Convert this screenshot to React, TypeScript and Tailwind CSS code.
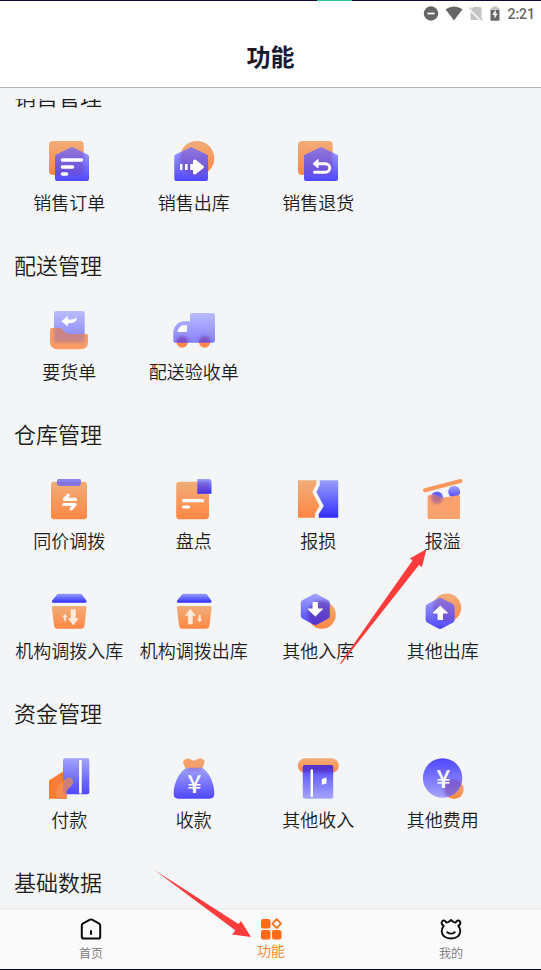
import { useId, type ReactNode } from "react";

type PaintProps = { children: (paint: { orange: string; blue: string; deep: string; reverse: string; pale: string; id: string }) => ReactNode };

/** 42×42 canvas with the shared orange and blue gradients. */
function Glyph({ children }: PaintProps) {
  const id = useId().replace(/[^a-zA-Z0-9]/g, "");
  const ramp = (name: string, from: string, to: string) => (
    <linearGradient id={id + name} x1="0" y1="0" x2="0" y2="1">
      <stop offset="0" stopColor={from} />
      <stop offset="1" stopColor={to} />
    </linearGradient>
  );
  const url = (name: string) => `url(#${id}${name})`;
  return (
    <svg viewBox="0 0 42 42" className="size-[42px] overflow-visible" aria-hidden="true">
      <defs>
        {ramp("o", "#f0ad7a", "#ff8743")}
        {ramp("b", "#a3a3fb", "#4f47ff")}
        {ramp("d", "#9aa0f8", "#322cff")}
        {ramp("r", "#4f47ff", "#a5a5fb")}
        {ramp("p", "#babcfd", "#8681fc")}
        <filter id={id + "f"} x="-20%" y="-20%" width="140%" height="140%">
          <feGaussianBlur stdDeviation="1.5" />
        </filter>
      </defs>
      {children({ orange: url("o"), blue: url("b"), deep: url("d"), reverse: url("r"), pale: url("p"), id })}
    </svg>
  );
}

/** A shape of frosted glass through which the shape behind shows softly. */
function Glass({ id, shape, behind, fill, tint = "#7439a8", strength = 0.5 }: { id: string; shape: string; behind: ReactNode; fill: string; tint?: string; strength?: number }) {
  return (
    <>
      <path d={shape} fill={fill} />
      <clipPath id={id + "c"}>
        <path d={shape} />
      </clipPath>
      <g clipPath={`url(#${id}c)`}>
        <g filter={`url(#${id}f)`} fill={tint} stroke="none" opacity={strength}>
          {behind}
        </g>
      </g>
    </>
  );
}

const HOUSE_RIGHT = "M7 16.500Q7 15 8.400 14.400L23 7.500Q24 7 25 7.500L39.600 14.400Q41 15 41 16.500V39Q41 41 39 41H9Q7 41 7 39Z";
const HOUSE_LEFT = "M1.300 16.500Q1.300 15 2.700 14.400L17.200 7.500Q18.200 7 19.200 7.500L33.700 14.400Q35 15 35 16.500V39Q35 41 33 41H3.300Q1.300 41 1.300 39Z";

const SalesOrder = () => (
  <Glyph>
    {(p) => (
      <>
        <rect x="1" y="1" width="34.700" height="34" rx="4" fill={p.orange} />
        <Glass id={p.id} shape={HOUSE_RIGHT} fill={p.blue} strength={0.4} behind={<rect x="1" y="1" width="34.700" height="34" rx="4" />} />
        <path d="M14.500 20H33.500M14.500 27H24.500M14.500 34H18.500" stroke="#fff" strokeWidth="3.600" strokeLinecap="round" />
      </>
    )}
  </Glyph>
);

const SalesOut = () => (
  <Glyph>
    {(p) => (
      <>
        <circle cx="24" cy="18.300" r="17.300" fill={p.orange} />
        <Glass id={p.id} shape={HOUSE_LEFT} fill={p.blue} strength={0.4} behind={<circle cx="24" cy="18.300" r="17.300" />} />
        <path d="M7 24H9.400V30H7ZM12 24H14.600V30H12ZM17.300 24H20V21Q20.500 18.500 23 20L30.500 26Q31.500 27 30.500 28L23 34Q20.500 35.500 20 33V30H17.300Z" fill="#fff" />
      </>
    )}
  </Glyph>
);

const SalesReturn = () => (
  <Glyph>
    {(p) => (
      <>
        <rect x="1" y="1" width="34.700" height="34" rx="4" fill={p.orange} />
        <Glass id={p.id} shape={HOUSE_RIGHT} fill={p.blue} strength={0.4} behind={<rect x="1" y="1" width="34.700" height="34" rx="4" />} />
        <path d="M19 23.700H28.500A4.200 4.200 0 0 1 28.500 32.200H17.500" fill="none" stroke="#fff" strokeWidth="3" strokeLinecap="round" />
        <path d="M16 23.700L21 19.500V28Z" fill="#fff" stroke="#fff" strokeLinejoin="round" />
      </>
    )}
  </Glyph>
);

const GoodsRequest = () => (
  <Glyph>
    {(p) => (
      <>
        <rect x="6" y="2" width="30.700" height="31.500" rx="2" fill={p.pale} />
        <Glass
          id={p.id}
          shape="M2 20.500Q2 19 3.500 19H12Q14 19 15.500 21.500Q17.500 25 20.500 25H38.500Q40 25 40 26.500V33Q40 40.300 32.500 40.300H9.500Q2 40.300 2 33Z"
          fill="#ff9c66"
          tint="#ad7894"
          strength={0.65}
          behind={<rect x="6" y="10" width="30.700" height="23.500" />}
        />
        <path d="M13.500 12.300L19.800 6.800V10.200Q26 11 28.500 8.500V10.500Q27.500 14.500 19.800 14.300V17.500Z" fill="#fff" />
      </>
    )}
  </Glyph>
);

const Truck = () => (
  <Glyph>
    {(p) => (
      <>
        <circle cx="9.200" cy="33" r="5.700" fill="#ff8748" />
        <circle cx="31.600" cy="33" r="5.700" fill="#ff8748" />
        <Glass
          id={p.id}
          shape="M17 6Q17 4 19 4H40Q42 4 42 6V31.700Q42 33.700 40 33.700H2.300Q.3 33.700 .3 31.700V22Q3 12.300 11 12.300H17Z"
          fill={p.pale}
          strength={0.65}
          behind={<><circle cx="9.200" cy="33" r="6" /><circle cx="31.600" cy="33" r="6" /></>}
        />
        <path d="M14 16.200V21.800Q14 23 12.800 23H5.200Q4.200 23 4.700 21.500Q7 16.200 11 16.200Z" fill="#fff" />
      </>
    )}
  </Glyph>
);

const EqualTransfer = () => (
  <Glyph>
    {(p) => (
      <>
        <rect x="3" y="3.700" width="36" height="37.600" rx="3" fill={p.orange} />
        <rect x="9" y="1" width="24" height="7" rx="3.200" fill="#8374dc" />
        <rect x="9" y="1" width="24" height="3" rx="1.500" fill="#8c84f0" />
        <path d="M27.500 21.300H16.300L20.200 17.300M15.800 26.500H27L23.200 31" fill="none" stroke="#fff" strokeWidth="3.200" strokeLinecap="round" strokeLinejoin="round" />
      </>
    )}
  </Glyph>
);

const StockCount = () => (
  <Glyph>
    {(p) => (
      <>
        <rect x="3.200" y="3.700" width="32.800" height="37.600" rx="3.500" fill={p.orange} />
        <Glass
          id={p.id}
          shape="M24.300 1H35.500Q38.500 1 38.500 4V15.800H24.300Z"
          fill={p.deep}
          strength={0.4}
          behind={<rect x="24" y="4" width="12" height="12" />}
        />
        <path d="M10.600 22.700H29.500M10.600 29H15.600" stroke="#fff" strokeWidth="3.200" strokeLinecap="round" />
      </>
    )}
  </Glyph>
);

const Damage = () => (
  <Glyph>
    {(p) => (
      <>
        <path d="M1 2.300H19.400V6L15.400 14L22.600 28L18 35.500V39.700H1Z" fill={p.orange} />
        <path d="M22.800 2.300H41.200V39.700H21.800V36L26.800 28L19.400 14L22.800 7Z" fill={p.deep} />
      </>
    )}
  </Glyph>
);

const Overflow = () => (
  <Glyph>
    {(p) => (
      <>
        <path d="M3 12.300L38.500 3" stroke="#f8985f" strokeWidth="4" strokeLinecap="round" />
        <circle cx="15" cy="19.400" r="6" fill="#6862fc" />
        <circle cx="32.200" cy="13.700" r="6" fill={p.blue} />
        <Glass
          id={p.id}
          shape="M5.600 19Q5.600 17.500 7 17.300L11 16.500Q15 17.500 17.500 19Q19.500 20 22 19.400L36.500 17.200Q38 17 38 18.500V39.500Q38 41 36.500 41H7Q5.600 41 5.600 39.500Z"
          fill="#fba16d"
          tint="#aa6494"
          strength={0.8}
          behind={<circle cx="15" cy="19.700" r="6" />}
        />
      </>
    )}
  </Glyph>
);

const Basket = ({ incoming = false }: { incoming?: boolean }) => (
  <Glyph>
    {(p) => (
      <>
        <path d="M11 5.700H32Q33.200 5.700 34 6.500L38.300 12.500Q39.300 14.700 37 14.700H5.500Q3.200 14.700 4.200 12.500L9 6.500Q9.800 5.700 11 5.700Z" fill={p.deep} />
        <path d="M5.500 18H37Q38.700 18 38.600 19.500L36.400 38Q36 40.700 33.500 40.700H9Q6.500 40.700 6.100 38L3.900 19.500Q3.800 18 5.500 18Z" fill={p.orange} />
        {incoming ? (
          <path d="M17 26L19.300 29H17.700V33H16.300V29H14.700ZM23 22Q23 21.500 23.500 21.500H27Q27.500 21.500 27.500 22V30.500H30.300L25.300 37L20.300 30.500H23Z" fill="#ffeadc" stroke="#ffeadc" strokeWidth=".5" strokeLinejoin="round" />
        ) : (
          <path d="M17.300 21L22.300 27.500H19.500V35.500Q19.500 36 19 36H15.700Q15.200 36 15.200 35.500V27.500H12.300ZM26 27H27.400V31H29L26.700 34L24.400 31H26Z" fill="#ffeadc" stroke="#ffeadc" strokeWidth=".5" strokeLinejoin="round" />
        )}
      </>
    )}
  </Glyph>
);

const OtherIn = () => (
  <Glyph>
    {(p) => (
      <>
        <circle cx="24.800" cy="26.800" r="14" fill={p.orange} />
        <Glass
          id={p.id}
          shape="M16 6.500Q18.300 5 20.500 6.500L31.300 12.300Q32.800 13.300 32.800 15V27.800Q32.800 29.500 31.300 30.500L20.500 36.300Q18.300 37.800 16 36.300L5.300 30.500Q3.800 29.500 3.800 27.800V15Q3.800 13.300 5.300 12.300Z"
          fill={p.blue}
          tint="#571b9b"
          behind={<circle cx="24.800" cy="26.800" r="14" />}
        />
        <path d="M16 14.500H20.500V21H25.500L18.300 28L11 21H16Z" fill="#fff" stroke="#fff" strokeWidth="1" strokeLinejoin="round" />
      </>
    )}
  </Glyph>
);

const OtherOut = () => (
  <Glyph>
    {(p) => (
      <>
        <circle cx="25" cy="19.700" r="14.200" fill={p.orange} />
        <Glass
          id={p.id}
          shape="M15.800 10.500Q18.100 9 20.300 10.500L31.100 16.300Q32.600 17.300 32.600 19V31.800Q32.600 33.500 31.100 34.500L20.300 40.300Q18.100 41.800 15.800 40.300L5.100 34.500Q3.600 33.500 3.600 31.800V19Q3.600 17.300 5.100 16.300Z"
          fill={p.blue}
          strength={0.4}
          behind={<circle cx="25" cy="19.700" r="14.200" />}
        />
        <path d="M18.200 18L25.500 25H20.500V31.500H16V25H11Z" fill="#fff" stroke="#fff" strokeWidth="1" strokeLinejoin="round" />
      </>
    )}
  </Glyph>
);

const Pay = () => (
  <Glyph>
    {(p) => (
      <>
        <path d="M1 23.500L18.700 12V41.700H1Z" fill="#ff7d31" />
        <rect x="15" y="1.300" width="26.300" height="36" rx="2" fill={p.blue} />
        <path d="M32.400 4V35.500" stroke="#fff" strokeWidth="2.600" strokeLinecap="round" />
        <path d="M8.500 41.700V34Q8.500 30.500 11 28L18 21.500Q22 19 24.500 22.500Q26 25.500 23.500 28.500L18.700 33.500V41.700Z" fill="#cd8079" />
        <path d="M8.500 41.700V34Q8.500 30.500 11 28L15 24.500V37.500H18.700V41.700Z" fill="#ff8c4d" />
      </>
    )}
  </Glyph>
);

function Yen({ y }: { y: number }) {
  return (
    <text x="21.300" y={y} textAnchor="middle" fill="#fff" className="font-['Noto_Sans_CJK_SC',sans-serif] text-[25px] leading-6 font-medium">
      ¥
    </text>
  );
}

const Collect = () => (
  <Glyph>
    {(p) => (
      <>
        <path d="M14 1.500Q17 1.300 19 3Q21 4 23 3Q25 1.300 28 1.500Q33 3 31 7L28.500 14H14L10.500 7Q9 3 14 1.500Z" fill="#f4a06b" />
        <Glass
          id={p.id}
          shape="M14 10.700H28.500C35 13 41.300 25 41.300 36.500Q41.300 41.700 36.500 41.700H5.500Q.6 41.700 .6 36.500C.6 25 7.500 13 14 10.700Z"
          fill={p.blue}
          strength={0.3}
          behind={<rect x="14" y="8" width="14" height="6" />}
        />
        <Yen y={36} />
      </>
    )}
  </Glyph>
);

const OtherIncome = () => (
  <Glyph>
    {(p) => (
      <>
        <rect x=".8" y="1.300" width="41" height="14.700" rx="7.300" fill={p.orange} />
        <Glass
          id={p.id}
          shape="M8 8H34Q36.200 8 36.200 10V39.500Q36.200 41.700 34 41.700H8Q5.800 41.700 5.800 39.500V10Q5.800 8 8 8Z"
          fill={p.reverse}
          tint="#561a98"
          behind={<rect x="2" y="1" width="38" height="14.500" />}
        />
        <path d="M14.800 13.500V39" stroke="#fff" strokeWidth="2.400" strokeLinecap="round" />
        <path d="M24.800 22L29.500 20.500V26.500L24.800 27.800Z" fill="#fff" />
      </>
    )}
  </Glyph>
);

const OtherCost = () => (
  <Glyph>
    {(p) => (
      <>
        <circle cx="32" cy="32.300" r="9.700" fill={p.orange} />
        <Glass id={p.id} shape="M20.600 1.300A19.700 19.700 0 1 1 20.600 40.700A19.700 19.700 0 1 1 20.600 1.300Z" fill={p.reverse} behind={<circle cx="32" cy="32.300" r="10" />} />
        <Yen y={31} />
      </>
    )}
  </Glyph>
);

type Item = { label: string; icon: ReactNode };

const sections: { title: string; items: Item[] }[] = [
  {
    title: "销售管理",
    items: [
      { label: "销售订单", icon: <SalesOrder /> },
      { label: "销售出库", icon: <SalesOut /> },
      { label: "销售退货", icon: <SalesReturn /> },
    ],
  },
  {
    title: "配送管理",
    items: [
      { label: "要货单", icon: <GoodsRequest /> },
      { label: "配送验收单", icon: <Truck /> },
    ],
  },
  {
    title: "仓库管理",
    items: [
      { label: "同价调拨", icon: <EqualTransfer /> },
      { label: "盘点", icon: <StockCount /> },
      { label: "报损", icon: <Damage /> },
      { label: "报溢", icon: <Overflow /> },
      { label: "机构调拨入库", icon: <Basket incoming /> },
      { label: "机构调拨出库", icon: <Basket /> },
      { label: "其他入库", icon: <OtherIn /> },
      { label: "其他出库", icon: <OtherOut /> },
    ],
  },
  {
    title: "资金管理",
    items: [
      { label: "付款", icon: <Pay /> },
      { label: "收款", icon: <Collect /> },
      { label: "其他收入", icon: <OtherIncome /> },
      { label: "其他费用", icon: <OtherCost /> },
    ],
  },
  { title: "基础数据", items: [] },
];

function StatusBar() {
  return (
    <div className="flex h-[26px] items-center justify-end gap-[6px] pr-[6px] text-[#666]">
      <svg viewBox="0 0 16 16" className="size-4" aria-hidden="true">
        <circle cx="8" cy="7.500" r="7.200" fill="currentColor" />
        <path d="M4.500 7.500H11.500" stroke="#fff" strokeWidth="1.800" />
      </svg>
      <svg viewBox="0 0 18 16" className="h-4 w-[18px]" aria-hidden="true">
        <path d="M.5 3.300Q9-2.500 17.500 3.300L9 14.500Z" fill="currentColor" />
      </svg>
      <svg viewBox="0 0 14 16" className="h-4 w-[14px]" aria-hidden="true">
        <path d="M4.500 1H11Q12.500 1 12.500 2.500V14H3Q1.500 14 1.500 12.500V4Z" fill="#c4c4c4" />
        <path d="M0 2.500L13 15.500" stroke="#fff" strokeWidth="2" />
        <path d="M.5 1.500L13.500 14.500" stroke="#c4c4c4" strokeWidth="1.200" />
      </svg>
      <svg viewBox="0 0 12 16" className="h-4 w-3" aria-hidden="true">
        <path d="M1.500 4.500V3Q1.500 1.500 3 1.500H4V.3H8V1.500H9Q10.500 1.500 10.500 3V4.500Z" fill="#c4c4c4" />
        <path d="M1.500 4H10.500V13.500Q10.500 14.700 9.300 14.700H2.700Q1.500 14.700 1.500 13.500Z" fill="currentColor" />
        <path d="M6.700 3.500L3.300 9H5.500V12.800L8.700 7.500H6.700Z" fill="#fff" />
      </svg>
      <span className="font-[Roboto,sans-serif] text-sm font-medium">2:21</span>
    </div>
  );
}

const HomeIcon = () => (
  <svg viewBox="0 0 22 22" className="size-[22px]" fill="none" stroke="#0c0c0c" strokeWidth="2" strokeLinejoin="round" strokeLinecap="round" aria-hidden="true">
    <path d="M1.800 7.500Q1.800 6.300 2.800 5.700L10 1.700Q11 1.200 12 1.700L19.200 5.700Q20.200 6.300 20.200 7.500V18.700Q20.200 20.500 18.400 20.500H3.600Q1.800 20.500 1.800 18.700ZM11 13V16" />
  </svg>
);

const FunctionIcon = () => (
  <svg viewBox="0 0 22 22" className="size-[22px]" fill="#ff6b18" aria-hidden="true">
    <rect x="1" y="1" width="9.500" height="9.500" rx="2" />
    <rect x="1" y="12" width="9.500" height="9.500" rx="2" />
    <rect x="12" y="12" width="9.500" height="9.500" rx="2" />
    <path d="M16.700 1.200L21 5.700L16.700 10.200L12.400 5.700Z" fill="none" stroke="#ff6b18" strokeWidth="1.700" strokeLinejoin="round" />
  </svg>
);

const MineIcon = () => (
  <svg viewBox="0 0 22 22" className="size-[22px]" fill="none" stroke="#0c0c0c" strokeWidth="1.900" strokeLinejoin="round" strokeLinecap="round" aria-hidden="true">
    <path d="M3.700 7.800Q1.200 6.300 1.700 4.200Q2.500 2 4.500 2.600Q5.700 3.200 6.300 4.500Q8.500 4.500 9.200 3.500L11 2L12.800 3.500Q13.500 4.500 15.700 4.500Q16.300 3.200 17.500 2.600Q19.500 2 20.300 4.200Q20.800 6.300 18.300 7.800Q20.500 10.500 20.300 13.500Q19.500 20.500 11 20.500Q2.500 20.500 1.700 13.500Q1.500 10.500 3.700 7.800Z" />
    <path d="M7.200 14.200Q11 17 14.800 14.200" />
  </svg>
);

export default function App() {
  return (
    <div className="relative flex h-screen flex-col overflow-hidden bg-[#f3f5f7] font-['Noto_Sans_CJK_SC',sans-serif] font-[350] text-[#1c1c1c]">
      <div className="h-px shrink-0 bg-[#0d0d33]">
        <div className="ml-[317px] h-px w-[35px] bg-[#2ec492]" />
      </div>
      <header className="shrink-0 border-b border-[#b4b4b4] bg-white">
        <StatusBar />
        <h1 className="h-[60px] pt-[11px] text-center text-2xl leading-9 font-bold text-[#141b33]">功能</h1>
      </header>

      <main className="mt-[11px] min-h-0 flex-1 overflow-hidden">
        <div className="-mt-[17px]">
          {sections.map((section) => (
            <section key={section.title} className="mb-[37px]">
              <h2 className="pl-[14px] text-[22px] leading-[26px]">{section.title}</h2>
              <div className="mt-8 grid grid-cols-4 gap-y-9 pr-9 pl-[7px]">
                {section.items.map((item) => (
                  <button key={item.label} type="button" className="flex flex-col items-center gap-2 text-lg leading-6 whitespace-nowrap">
                    {item.icon}
                    <span>{item.label}</span>
                  </button>
                ))}
              </div>
            </section>
          ))}
        </div>
      </main>

      <nav className="grid h-[61px] shrink-0 grid-cols-3 border-t-2 border-[#eeeff0] bg-[#fafafa] pl-px text-xs text-[#757575]">
        <button type="button" className="flex flex-col items-center gap-[3px] pt-2">
          <HomeIcon />
          <span className="leading-5">首页</span>
        </button>
        <button type="button" aria-current="page" className="flex flex-col items-center pt-2 text-sm text-[#ff7d22]">
          <FunctionIcon />
          <span className="leading-5">功能</span>
        </button>
        <button type="button" className="flex flex-col items-center gap-[3px] pt-2">
          <MineIcon />
          <span className="leading-5">我的</span>
        </button>
      </nav>
      <div className="h-px shrink-0 bg-[#0d0d33]" />

      <svg viewBox="0 0 541 970" className="pointer-events-none absolute top-0 left-0 h-[970px] w-[541px]" fill="#fc3b3b" aria-hidden="true">
        <path d="M340 663.500L412.500 560.500L410 558.500L426.500 549L422 567L419 565L341 664Z" />
        <path d="M154.500 870L238.500 924L241 921L251 937L232 934.500L235.500 930.500Z" />
      </svg>
    </div>
  );
}
